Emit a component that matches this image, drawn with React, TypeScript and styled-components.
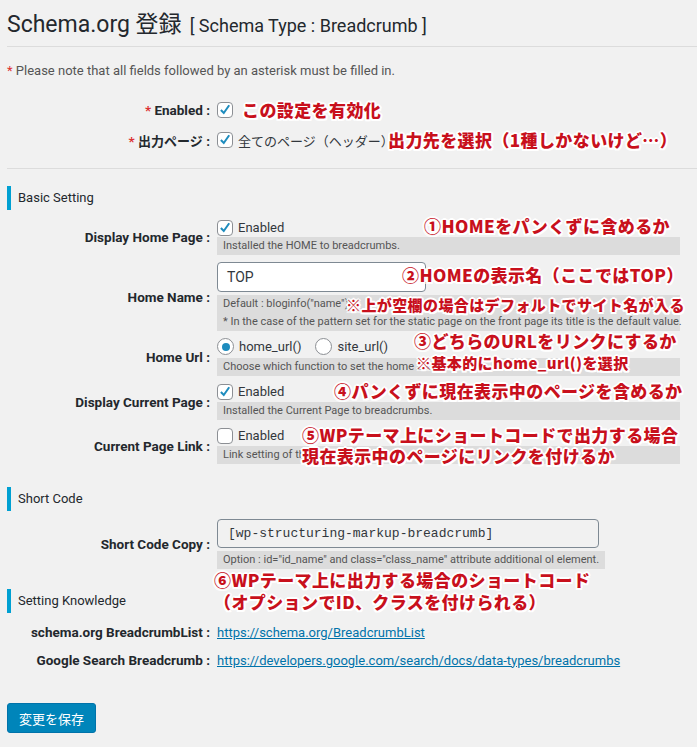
import React from "react";
import styled, { createGlobalStyle } from "styled-components";

const GlobalStyle = createGlobalStyle`
  html, body { margin: 0; padding: 0; background: #f1f1f1; }
  body {
    font-family: Roboto, "Noto Sans CJK JP", sans-serif;
    color: #444;
    font-size: 13px;
  }
`;

const Page = styled.div`
  position: relative;
  padding: 0 0 13px 7px;
  width: 690px;
`;

const Header = styled.header`
  display: flex;
  align-items: baseline;
  gap: 8px;
  padding: 10px 0 7px;
  border-bottom: 1px solid #dcdcdc;
`;

const Title = styled.h1`
  margin: 0;
  font-size: 23px;
  font-weight: 400;
  line-height: 29px;
  color: #23282d;
`;

const SubTitle = styled.span`
  font-size: 18px;
  color: #23282d;
`;

const Note = styled.p`
  margin: 15px 0 0;
  font-size: 13px;
  line-height: 18px;
  color: #555;
`;

const Star = styled.span`
  color: #dc3232;
`;

const RequiredGrid = styled.div`
  margin-top: 15px;
  padding-bottom: 13px;
  border-bottom: 1px solid #dcdcdc;
  display: grid;
  grid-template-columns: 203px 1fr;
  column-gap: 7px;
  grid-auto-rows: 30px;
  align-items: center;
`;

const FormGrid = styled.div<{ $gap?: number; $top?: number }>`
  margin-top: ${(p) => p.$top ?? 9}px;
  display: grid;
  grid-template-columns: 203px 1fr;
  column-gap: 7px;
  row-gap: ${(p) => p.$gap ?? 7}px;
  align-items: center;
`;

const LinkGrid = styled.div`
  margin-top: 5px;
  display: grid;
  grid-template-columns: 203px 1fr;
  column-gap: 7px;
  grid-auto-rows: 28px;
  align-items: center;
`;

const Label = styled.div`
  text-align: right;
  font-weight: 700;
  font-size: 13.5px;
  color: #23282d;
  white-space: nowrap;
`;

const Cell = styled.div`
  display: flex;
  flex-direction: column;
  align-items: flex-start;
`;

const ChoiceLine = styled.div`
  display: flex;
  align-items: center;
  gap: 5px;
  height: 17px;
  font-size: 13px;
  color: #32373c;
`;

const ChoiceText = styled.span`
  margin-right: 9px;
`;

const JpText = styled.span`
  font-family: "Noto Sans CJK JP", sans-serif;
  font-size: 13px;
  color: #32373c;
`;

const JpLabel = styled.span`
  font-family: "Noto Sans CJK JP", sans-serif;
  font-size: 13px;
`;

const Box = styled.span`
  display: inline-flex;
  align-items: center;
  justify-content: center;
  width: 14px;
  height: 14px;
  border: 1px solid #8c8f94;
  border-radius: 4px;
  background: #fff;
  flex: none;
`;

const Round = styled.span<{ $on?: boolean }>`
  display: inline-flex;
  align-items: center;
  justify-content: center;
  width: 15px;
  height: 15px;
  border: 1px solid #8c8f94;
  border-radius: 50%;
  background: #fff;
  flex: none;
  &::after {
    content: "";
    width: 8px;
    height: 8px;
    border-radius: 50%;
    background: ${(p) => (p.$on ? "#1e8cbe" : "transparent")};
  }
`;

const Desc = styled.div<{ $fit?: boolean; $gap?: number }>`
  margin-top: ${(p) => p.$gap ?? 1}px;
  width: ${(p) => (p.$fit ? "auto" : "451px")};
  padding: 0 6px;
  background: #dcdcdc;
  color: #555;
  font-size: 11px;
  line-height: 18px;
  white-space: nowrap;
`;

const TextInput = styled.div`
  box-sizing: border-box;
  width: 209px;
  height: 30px;
  padding: 0 9px;
  border: 1px solid #7e8993;
  border-radius: 4px;
  background: #fff;
  font-size: 14px;
  line-height: 28px;
  color: #32373c;
`;

const CodeInput = styled.div`
  box-sizing: border-box;
  width: 382px;
  height: 29px;
  padding: 0 10px;
  border: 1px solid #7e8993;
  border-radius: 4px;
  background: #f1f1f1;
  font-family: "Liberation Mono", monospace;
  font-size: 13px;
  line-height: 27px;
  color: #32373c;
`;

const SectionHeading = styled.h2<{ $top: number }>`
  margin: ${(p) => p.$top}px 0 0;
  height: 24px;
  line-height: 24px;
  border-left: 4px solid #00a0d2;
  padding-left: 7px;
  font-size: 13px;
  font-weight: 400;
  color: #23282d;
`;

const Link = styled.a`
  color: #0073aa;
  text-decoration: underline;
  font-size: 13px;
`;

const SaveButton = styled.button`
  margin-top: 29px;
  height: 30px;
  padding: 0 11px;
  border: 1px solid #0073aa;
  border-radius: 3px;
  background: #0085ba;
  color: #fff;
  font-family: "Noto Sans CJK JP", sans-serif;
  font-size: 13px;
`;

const Annotation = styled.div<{ $x: number; $y: number; $size?: number }>`
  position: absolute;
  left: ${(p) => p.$x}px;
  top: ${(p) => p.$y - Math.round((p.$size ?? 17) * 0.6)}px;
  font-family: "Noto Sans CJK JP", sans-serif;
  font-weight: 900;
  font-size: ${(p) => p.$size ?? 17}px;
  line-height: 1.2;
  letter-spacing: 0.4px;
  color: #c8101c;
  white-space: nowrap;
  text-shadow: 2px 0 #fff, -2px 0 #fff, 0 2px #fff, 0 -2px #fff,
    1.5px 1.5px #fff, -1.5px 1.5px #fff, 1.5px -1.5px #fff, -1.5px -1.5px #fff;
`;

const Check = () => (
  <Box>
    <svg width="16" height="16" viewBox="0 0 16 16">
      <path d="M3.3 8 L6.6 11.4 L12.8 2.6" fill="none" stroke="#1e8cbe" strokeWidth="2.3" />
    </svg>
  </Box>
);

const annotations: { x: number; y: number; size?: number; text: string }[] = [
  { x: 242, y: 110, text: "この設定を有効化" },
  { x: 388, y: 140, text: "出力先を選択（1種しかないけど…）" },
  { x: 424, y: 226, text: "①HOMEをパンくずに含めるか" },
  { x: 402, y: 275, text: "②HOMEの表示名（ここではTOP）" },
  { x: 346, y: 305, size: 15, text: "※上が空欄の場合はデフォルトでサイト名が入る" },
  { x: 414, y: 341, text: "③どちらのURLをリンクにするか" },
  { x: 416, y: 363, size: 15, text: "※基本的にhome_url()を選択" },
  { x: 334, y: 391, text: "④パンくずに現在表示中のページを含めるか" },
  { x: 302, y: 435, text: "⑤WPテーマ上にショートコードで出力する場合" },
  { x: 302, y: 456, text: "現在表示中のページにリンクを付けるか" },
  { x: 214, y: 580, text: "⑥WPテーマ上に出力する場合のショートコード" },
  { x: 214, y: 602, text: "（オプションでID、クラスを付けられる）" },
];

export default function App() {
  return (
    <>
      <GlobalStyle />
      <Page>
        <Header>
          <Title>Schema.org 登録</Title>
          <SubTitle>[ Schema Type : Breadcrumb ]</SubTitle>
        </Header>
        <Note>
          <Star>*</Star> Please note that all fields followed by an asterisk must be filled in.
        </Note>

        <RequiredGrid>
          <Label>
            <Star>*</Star> Enabled :
          </Label>
          <ChoiceLine>
            <Check />
          </ChoiceLine>
          <Label>
            <Star>*</Star> <JpLabel>出力ページ</JpLabel> :
          </Label>
          <ChoiceLine>
            <Check />
            <JpText>全てのページ（ヘッダー）</JpText>
          </ChoiceLine>
        </RequiredGrid>

        <SectionHeading $top={17}>Basic Setting</SectionHeading>
        <FormGrid>
          <Label>Display Home Page :</Label>
          <Cell>
            <ChoiceLine>
              <Check />
              <ChoiceText>Enabled</ChoiceText>
            </ChoiceLine>
            <Desc>Installed the HOME to breadcrumbs.</Desc>
          </Cell>

          <Label>Home Name :</Label>
          <Cell>
            <TextInput>TOP</TextInput>
            <Desc $gap={3}>
              Default : bloginfo("name")
              <br />* In the case of the pattern set for the static page on the front page its title is the default value.
            </Desc>
          </Cell>

          <Label>Home Url :</Label>
          <Cell>
            <ChoiceLine>
              <Round $on />
              <ChoiceText>home_url()</ChoiceText>
              <Round />
              <ChoiceText>site_url()</ChoiceText>
            </ChoiceLine>
            <Desc $gap={3}>Choose which function to set the home URL.</Desc>
          </Cell>

          <Label>Display Current Page :</Label>
          <Cell>
            <ChoiceLine>
              <Check />
              <ChoiceText>Enabled</ChoiceText>
            </ChoiceLine>
            <Desc $gap={2}>Installed the Current Page to breadcrumbs.</Desc>
          </Cell>

          <Label>Current Page Link :</Label>
          <Cell>
            <ChoiceLine>
              <Box />
              <ChoiceText>Enabled</ChoiceText>
            </ChoiceLine>
            <Desc $gap={2}>Link setting of the Current Page.</Desc>
          </Cell>
        </FormGrid>

        <SectionHeading $top={23}>Short Code</SectionHeading>
        <FormGrid $top={8}>
          <Label>Short Code Copy :</Label>
          <Cell>
            <CodeInput>[wp-structuring-markup-breadcrumb]</CodeInput>
            <Desc $fit $gap={3}>
              Option : id="id_name" and class="class_name" attribute additional ol element.
            </Desc>
          </Cell>
        </FormGrid>

        <SectionHeading $top={20}>Setting Knowledge</SectionHeading>
        <LinkGrid>
          <Label>schema.org BreadcrumbList :</Label>
          <div>
            <Link href="#">https://schema.org/BreadcrumbList</Link>
          </div>
          <Label>Google Search Breadcrumb :</Label>
          <div>
            <Link href="#">https://developers.google.com/search/docs/data-types/breadcrumbs</Link>
          </div>
        </LinkGrid>

        <SaveButton>変更を保存</SaveButton>

        {annotations.map((a) => (
          <Annotation key={a.text} $x={a.x} $y={a.y} $size={a.size}>
            {a.text}
          </Annotation>
        ))}
      </Page>
    </>
  );
}
